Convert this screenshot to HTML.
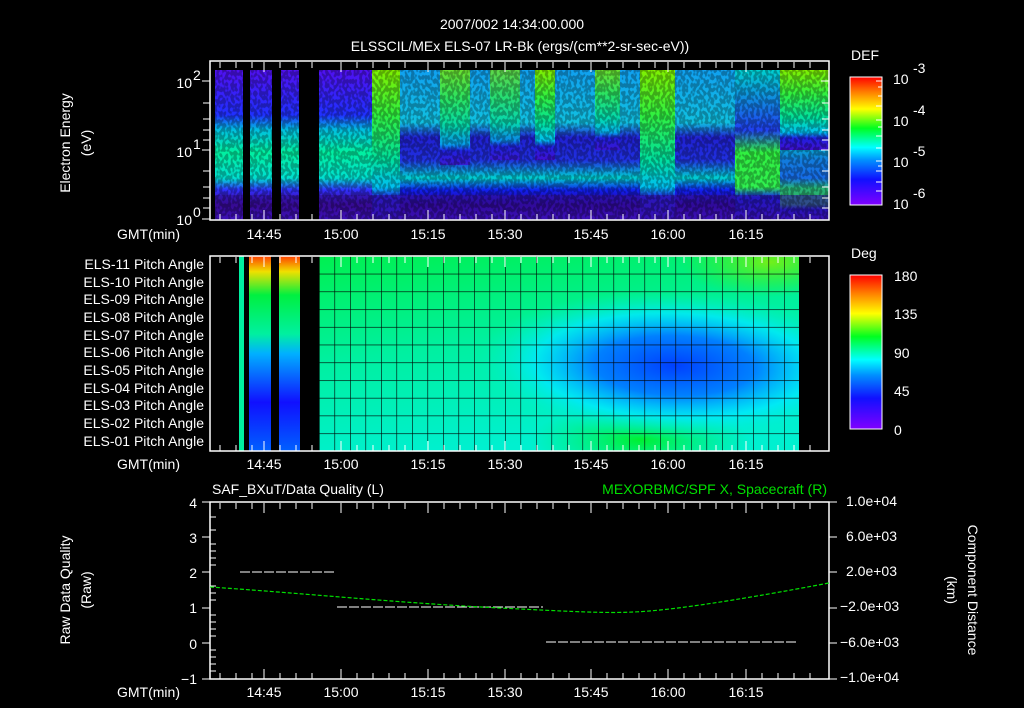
<!DOCTYPE html>
<html><head><meta charset="utf-8"><style>
html,body{margin:0;padding:0;background:#000;width:1024px;height:708px;overflow:hidden}
svg text{font-family:"Liberation Sans",sans-serif;fill:#fff;font-size:14px}
</style></head><body>
<svg width="1024" height="708" viewBox="0 0 1024 708" xmlns="http://www.w3.org/2000/svg">
<defs>
<clipPath id="pclip"><rect x="319" y="256" width="480" height="195"/></clipPath>
<linearGradient id="jet" x1="0" y1="1" x2="0" y2="0">
<stop offset="0" stop-color="#8000ff"/><stop offset="0.2" stop-color="#1010ff"/><stop offset="0.35" stop-color="#0090ff"/><stop offset="0.45" stop-color="#00ffff"/><stop offset="0.6" stop-color="#00ff20"/><stop offset="0.75" stop-color="#ffff00"/><stop offset="0.88" stop-color="#ff8000"/><stop offset="1" stop-color="#ff0000"/>
</linearGradient>
<linearGradient id="colA" x1="0" y1="0" x2="0" y2="1">
<stop offset="0" stop-color="#5010f0"/><stop offset="0.3" stop-color="#2030ff"/><stop offset="0.4" stop-color="#00c0e0"/><stop offset="0.55" stop-color="#00f0a0"/><stop offset="0.72" stop-color="#00e0d0"/><stop offset="0.8" stop-color="#3030ff"/><stop offset="0.9" stop-color="#400080"/><stop offset="1" stop-color="#5010e0"/>
</linearGradient>
<linearGradient id="colB" x1="0" y1="0" x2="0" y2="1">
<stop offset="0" stop-color="#10a0f0"/><stop offset="0.35" stop-color="#10c0e0"/><stop offset="0.45" stop-color="#2020d0"/><stop offset="0.6" stop-color="#2030e0"/><stop offset="0.72" stop-color="#00d0d0"/><stop offset="0.8" stop-color="#1020f0"/><stop offset="0.9" stop-color="#300090"/><stop offset="1" stop-color="#5010e0"/>
</linearGradient>
<linearGradient id="colG" x1="0" y1="0" x2="0" y2="1">
<stop offset="0" stop-color="#80f000"/><stop offset="0.3" stop-color="#30f040"/><stop offset="0.6" stop-color="#00e0a0"/><stop offset="0.78" stop-color="#00c0f0"/><stop offset="0.85" stop-color="#2020e0"/><stop offset="1" stop-color="#4010d0"/>
</linearGradient>
<linearGradient id="colL" x1="0" y1="0" x2="0" y2="1">
<stop offset="0" stop-color="#00d0d0"/><stop offset="0.4" stop-color="#2040f0"/><stop offset="0.55" stop-color="#30f040"/><stop offset="0.78" stop-color="#30f050"/><stop offset="0.85" stop-color="#1020f0"/><stop offset="1" stop-color="#4010d0"/>
</linearGradient>
<filter id="speck" x="0" y="0" width="1" height="1">
<feTurbulence type="fractalNoise" baseFrequency="0.35 0.25" numOctaves="1" seed="3" result="n"/>
<feColorMatrix in="n" type="matrix" values="0 0 0 0 0  0 0 0 0 0  0 0 0 0 0  0 0 0 -9 5.2" />
</filter>
<pattern id="grid" x="319" y="256" width="15.5" height="17.73" patternUnits="userSpaceOnUse">
<path d="M0 0V17.73M0 0H15.5" stroke="#000" stroke-width="1.2" fill="none"/>
</pattern>
<radialGradient id="blueblob" cx="0.72" cy="0.62" r="0.42" gradientTransform="rotate(20 0.72 0.62) scale(1 0.9)">
<stop offset="0" stop-color="#0040ff"/><stop offset="0.4" stop-color="#0080ff"/><stop offset="0.7" stop-color="#00e8ff" stop-opacity="0.8"/><stop offset="1" stop-color="#00f0c0" stop-opacity="0"/>
</radialGradient>
<radialGradient id="greenblob" cx="0.5" cy="0.5" r="0.5">
<stop offset="0" stop-color="#00f030"/><stop offset="1" stop-color="#00f060" stop-opacity="0"/>
</radialGradient>
<radialGradient id="ygblob" cx="0.5" cy="0.5" r="0.5">
<stop offset="0" stop-color="#90f000"/><stop offset="1" stop-color="#40f000" stop-opacity="0"/>
</radialGradient>
<linearGradient id="pbase" x1="0" y1="0" x2="0.3" y2="1">
<stop offset="0" stop-color="#00f050"/><stop offset="0.5" stop-color="#00f0a0"/><stop offset="1" stop-color="#00f0d0"/>
</linearGradient>
<linearGradient id="pstrip" x1="0" y1="0" x2="0" y2="1">
<stop offset="0" stop-color="#ff4000"/><stop offset="0.08" stop-color="#f0e000"/><stop offset="0.2" stop-color="#00f040"/><stop offset="0.4" stop-color="#00f0a0"/><stop offset="0.5" stop-color="#00b0ff"/><stop offset="0.75" stop-color="#1010ff"/><stop offset="1" stop-color="#0060ff"/>
</linearGradient>
</defs>

<text x="512" y="29" text-anchor="middle" font-size="16">2007/002 14:34:00.000</text>
<text x="520" y="51" text-anchor="middle" font-size="16">ELSSCIL/MEx ELS-07 LR-Bk  (ergs/(cm**2-sr-sec-eV))</text>

<!-- panel 1 -->
<rect x="215" y="70" width="614" height="150" fill="url(#colA)"/>
<rect x="375" y="70" width="454" height="150" fill="url(#colB)"/>
<rect x="372" y="70" width="28" height="150" fill="url(#colG)"/>
<rect x="440" y="70" width="30" height="95" fill="url(#colG)" opacity="0.8"/>
<rect x="490" y="70" width="30" height="90" fill="url(#colG)" opacity="0.7"/>
<rect x="535" y="70" width="20" height="90" fill="url(#colG)"/>
<rect x="595" y="70" width="25" height="80" fill="url(#colG)" opacity="0.8"/>
<rect x="640" y="70" width="35" height="150" fill="url(#colG)"/>
<rect x="735" y="70" width="45" height="150" fill="url(#colL)"/>
<rect x="780" y="70" width="49" height="80" fill="url(#colG)"/>
<rect x="780" y="150" width="49" height="70" fill="url(#colL)" opacity="0.7"/>
<rect x="215" y="195" width="614" height="25" fill="#3010a0" opacity="0.6"/>
<rect x="215" y="70" width="614" height="150" filter="url(#speck)" opacity="0.28"/>
<rect x="243" y="70" width="7" height="150" fill="#000"/>
<rect x="272" y="70" width="9" height="150" fill="#000"/>
<rect x="299" y="70" width="20" height="150" fill="#000"/>
<rect x="210" y="61" width="619" height="159" fill="none" stroke="#fff" stroke-width="1.5"/>
<text x="192" y="88" text-anchor="end">10</text><text x="193" y="80" font-size="9">2</text>
<text x="192" y="157" text-anchor="end">10</text><text x="193" y="149" font-size="9">1</text>
<text x="192" y="225" text-anchor="end">10</text><text x="193" y="217" font-size="9">0</text>
<g stroke="#fff"><path d="M202 81h8M202 150h8M202 219h8M821 81h8M821 150h8M203 103h7M203 119h7M203 130h7M203 140h7M203 171h7M203 187h7M203 198h7M203 208h7M822 103h7M822 119h7M822 130h7M822 140h7M822 171h7M822 187h7M822 198h7M822 208h7"/></g>
<text transform="translate(70,143) rotate(-90)" text-anchor="middle" font-size="15">Electron Energy</text>
<text transform="translate(91,143) rotate(-90)" text-anchor="middle" font-size="15">(eV)</text>

<g font-size="14">
<text x="117" y="239">GMT(min)</text>
<text x="264" y="239" text-anchor="middle">14:45</text><text x="341" y="239" text-anchor="middle">15:00</text><text x="428" y="239" text-anchor="middle">15:15</text><text x="505" y="239" text-anchor="middle">15:30</text><text x="591" y="239" text-anchor="middle">15:45</text><text x="668" y="239" text-anchor="middle">16:00</text><text x="746" y="239" text-anchor="middle">16:15</text>
<text x="117" y="469">GMT(min)</text>
<text x="264" y="469" text-anchor="middle">14:45</text><text x="341" y="469" text-anchor="middle">15:00</text><text x="428" y="469" text-anchor="middle">15:15</text><text x="505" y="469" text-anchor="middle">15:30</text><text x="591" y="469" text-anchor="middle">15:45</text><text x="668" y="469" text-anchor="middle">16:00</text><text x="746" y="469" text-anchor="middle">16:15</text>
<text x="117" y="697">GMT(min)</text>
<text x="264" y="697" text-anchor="middle">14:45</text><text x="341" y="697" text-anchor="middle">15:00</text><text x="428" y="697" text-anchor="middle">15:15</text><text x="505" y="697" text-anchor="middle">15:30</text><text x="591" y="697" text-anchor="middle">15:45</text><text x="668" y="697" text-anchor="middle">16:00</text><text x="746" y="697" text-anchor="middle">16:15</text>
</g>

<!-- colorbars -->
<text x="851" y="60" font-size="16">DEF</text>
<rect x="850" y="77" width="32" height="128" fill="url(#jet)" stroke="#fff"/>
<g stroke="#fff"><path d="M876 81h6M878 87h4M878 96h4M876 106h6M876 120h6M878 127h4M876 136h6M876 148h6M876 161h6M878 166h4M876 171h6M876 182h6M876 191h6"/></g>
<g font-size="16"><text x="893" y="84">10</text><text x="913" y="73" font-size="11">-3</text>
<text x="893" y="126">10</text><text x="913" y="115" font-size="11">-4</text>
<text x="893" y="167">10</text><text x="913" y="156" font-size="11">-5</text>
<text x="893" y="209">10</text><text x="913" y="198" font-size="11">-6</text></g>
<text x="851" y="258" font-size="16">Deg</text>
<rect x="850" y="275" width="32" height="154" fill="url(#jet)" stroke="#fff"/>
<g font-size="16"><text x="894" y="281">180</text><text x="894" y="319">135</text><text x="894" y="358">90</text><text x="894" y="396">45</text><text x="894" y="435">0</text></g>

<!-- panel 2 -->
<g clip-path="url(#pclip)">
<rect x="319" y="256" width="480" height="195" fill="url(#pbase)"/>
<ellipse cx="640" cy="440" rx="110" ry="35" fill="url(#greenblob)"/>
<ellipse cx="770" cy="262" rx="90" ry="35" fill="url(#ygblob)" opacity="0.8"/>
<rect x="319" y="256" width="480" height="195" fill="url(#blueblob)"/>
</g>
<rect x="239" y="256" width="5" height="195" fill="#00f0a0"/>
<rect x="249" y="256" width="22" height="195" fill="url(#pstrip)"/>
<rect x="279" y="256" width="21" height="195" fill="url(#pstrip)"/>
<rect x="319" y="256" width="480" height="195" fill="url(#grid)"/>
<rect x="210" y="256" width="619" height="195" fill="none" stroke="#fff" stroke-width="1.5"/>
<g font-size="13" text-anchor="end">
<text x="204" y="269">ELS-11 Pitch Angle</text><text x="204" y="287">ELS-10 Pitch Angle</text><text x="204" y="304">ELS-09 Pitch Angle</text><text x="204" y="322">ELS-08 Pitch Angle</text><text x="204" y="340">ELS-07 Pitch Angle</text><text x="204" y="357">ELS-06 Pitch Angle</text><text x="204" y="375">ELS-05 Pitch Angle</text><text x="204" y="393">ELS-04 Pitch Angle</text><text x="204" y="410">ELS-03 Pitch Angle</text><text x="204" y="428">ELS-02 Pitch Angle</text><text x="204" y="446">ELS-01 Pitch Angle</text>
</g>

<!-- panel 3 -->
<text x="212" y="494" font-size="16">SAF_BXuT/Data Quality (L)</text>
<text x="827" y="494" font-size="16" text-anchor="end" style="fill:#00e000">MEXORBMC/SPF X, Spacecraft (R)</text>
<rect x="210" y="502" width="619" height="177" fill="none" stroke="#fff" stroke-width="1.5"/>
<g font-size="15" text-anchor="end"><text x="197" y="508">4</text><text x="197" y="543">3</text><text x="197" y="578">2</text><text x="197" y="613">1</text><text x="197" y="649">0</text><text x="197" y="684">−1</text></g>
<g font-size="13"><text x="846" y="506">1.0e+04</text><text x="846" y="541">6.0e+03</text><text x="846" y="576">2.0e+03</text><text x="840" y="611">−2.0e+03</text><text x="840" y="647">−6.0e+03</text><text x="840" y="682">−1.0e+04</text></g>
<text transform="translate(70,590) rotate(-90)" text-anchor="middle" font-size="15">Raw Data Quality</text>
<text transform="translate(91,590) rotate(-90)" text-anchor="middle" font-size="15">(Raw)</text>
<text transform="translate(968,590) rotate(90)" text-anchor="middle" font-size="15">Component Distance</text>
<text transform="translate(947,590) rotate(90)" text-anchor="middle" font-size="15">(km)</text>
<g stroke="#fff"><path d="M202 502h8M202 537h8M202 572h8M202 608h8M202 643h8M202 679h8M829 502h8M829 537h8M829 572h8M829 608h8M829 643h8M829 679h8"/></g>
<g stroke="#fff" stroke-width="1"><path d="M240 572h96" stroke-dasharray="10 2"/><path d="M337 607h206" stroke-dasharray="10 2"/><path d="M546 642h252" stroke-dasharray="10 2"/></g>
<path d="M210 587 C300 593 400 603 500 608 S620 614 660 610 S760 596 829 583" fill="none" stroke="#00e000" stroke-width="1.2" stroke-dasharray="4 2"/>
<g stroke="#fff">
<path d="M220 62v6M236 62v6M252 62v6M264 62v10M280 62v6M296 62v6M312 62v6M341 62v10M357 62v6M373 62v6M389 62v6M405 62v6M428 62v10M444 62v6M460 62v6M476 62v6M492 62v6M505 62v10M521 62v6M537 62v6M553 62v6M569 62v6M591 62v10M607 62v6M623 62v6M639 62v6M655 62v6M668 62v10M684 62v6M700 62v6M716 62v6M732 62v6M746 62v10M762 62v6M778 62v6M794 62v6M810 62v6"/>
<path d="M220 220v-6M236 220v-6M252 220v-6M264 220v-10M280 220v-6M296 220v-6M312 220v-6M341 220v-10M357 220v-6M373 220v-6M389 220v-6M405 220v-6M428 220v-10M444 220v-6M460 220v-6M476 220v-6M492 220v-6M505 220v-10M521 220v-6M537 220v-6M553 220v-6M569 220v-6M591 220v-10M607 220v-6M623 220v-6M639 220v-6M655 220v-6M668 220v-10M684 220v-6M700 220v-6M716 220v-6M732 220v-6M746 220v-10M762 220v-6M778 220v-6M794 220v-6M810 220v-6"/>
<path d="M220 257v6M236 257v6M252 257v6M264 257v10M280 257v6M296 257v6M312 257v6M341 257v10M357 257v6M373 257v6M389 257v6M405 257v6M428 257v10M444 257v6M460 257v6M476 257v6M492 257v6M505 257v10M521 257v6M537 257v6M553 257v6M569 257v6M591 257v10M607 257v6M623 257v6M639 257v6M655 257v6M668 257v10M684 257v6M700 257v6M716 257v6M732 257v6M746 257v10M762 257v6M778 257v6M794 257v6M810 257v6"/>
<path d="M220 451v-6M236 451v-6M252 451v-6M264 451v-10M280 451v-6M296 451v-6M312 451v-6M341 451v-10M357 451v-6M373 451v-6M389 451v-6M405 451v-6M428 451v-10M444 451v-6M460 451v-6M476 451v-6M492 451v-6M505 451v-10M521 451v-6M537 451v-6M553 451v-6M569 451v-6M591 451v-10M607 451v-6M623 451v-6M639 451v-6M655 451v-6M668 451v-10M684 451v-6M700 451v-6M716 451v-6M732 451v-6M746 451v-10M762 451v-6M778 451v-6M794 451v-6M810 451v-6"/>
<path d="M220 503v6M236 503v6M252 503v6M264 503v10M280 503v6M296 503v6M312 503v6M341 503v10M357 503v6M373 503v6M389 503v6M405 503v6M428 503v10M444 503v6M460 503v6M476 503v6M492 503v6M505 503v10M521 503v6M537 503v6M553 503v6M569 503v6M591 503v10M607 503v6M623 503v6M639 503v6M655 503v6M668 503v10M684 503v6M700 503v6M716 503v6M732 503v6M746 503v10M762 503v6M778 503v6M794 503v6M810 503v6"/>
<path d="M220 679v-6M236 679v-6M252 679v-6M264 679v-10M280 679v-6M296 679v-6M312 679v-6M341 679v-10M357 679v-6M373 679v-6M389 679v-6M405 679v-6M428 679v-10M444 679v-6M460 679v-6M476 679v-6M492 679v-6M505 679v-10M521 679v-6M537 679v-6M553 679v-6M569 679v-6M591 679v-10M607 679v-6M623 679v-6M639 679v-6M655 679v-6M668 679v-10M684 679v-6M700 679v-6M716 679v-6M732 679v-6M746 679v-10M762 679v-6M778 679v-6M794 679v-6M810 679v-6"/>
<path d="M210 517h6M210 530h6M210 544h6M210 551h6M210 558h6M210 565h6M210 586h6M210 593h6M210 600h6M210 615h6M210 622h6M210 629h6M210 636h6M210 650h6M210 657h6M210 664h6M210 671h6"/>
</g>
</svg>
</body></html>
